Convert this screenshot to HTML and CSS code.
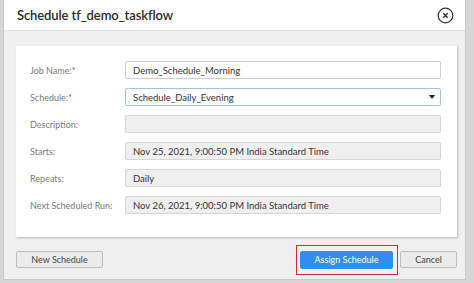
FILE: index.html
```html
<!DOCTYPE html>
<html lang="en">
  <head>
    <meta charset="UTF-8" />
    <title>Schedule tf_demo_taskflow</title>
    <link rel="stylesheet" href="styles.css">
  </head>
  <body>
    <div class="dialog">
      <div class="dialog-header">
        <span class="dialog-title">Schedule tf_demo_taskflow</span>
        <button class="close-btn" title="Close">
          <svg width="17" height="17" viewBox="0 0 17 17">
            <circle cx="8.5" cy="8.5" r="7.3" fill="none" stroke="#333" stroke-width="1.2" />
            <path d="M6.3 6.3 L10.7 10.7 M10.7 6.3 L6.3 10.7" stroke="#333" stroke-width="1.4" />
          </svg>
        </button>
      </div>

      <div class="dialog-body">
        <div class="form-card">
          <label class="field-label">Job Name:<span class="req">*</span></label>
          <div class="field-input">Demo_Schedule_Morning</div>

          <label class="field-label">Schedule:<span class="req">*</span></label>
          <div class="field-input select">
            <span>Schedule_Daily_Evening</span>
            <span class="caret"></span>
          </div>

          <label class="field-label">Description:</label>
          <div class="field-input readonly"></div>

          <label class="field-label">Starts:</label>
          <div class="field-input readonly">Nov 25, 2021, 9:00:50 PM India Standard Time</div>

          <label class="field-label">Repeats:</label>
          <div class="field-input readonly">Daily</div>

          <label class="field-label">Next Scheduled Run:</label>
          <div class="field-input readonly">Nov 26, 2021, 9:00:50 PM India Standard Time</div>
        </div>

        <div class="dialog-footer">
          <button class="btn btn-new">New Schedule</button>
          <div class="footer-right">
            <span class="highlight">
              <button class="btn btn-primary">Assign Schedule</button>
            </span>
            <button class="btn btn-cancel">Cancel</button>
          </div>
        </div>
      </div>
    </div>
  </body>
</html>
```

FILE: styles.css
```css
body {
  margin: 0;
  padding: 0;
  background-color: #d6d6d6;
  font-family: Lato, "Noto Sans", sans-serif;
  color: #333;
}

.dialog {
  width: 463px;
  height: 280px;
  margin-left: 3px;
  background-color: #f0f0f0;
  border: 1px solid #c9c9c9;
  border-top: none;
  box-sizing: border-box;
  display: flex;
  flex-direction: column;
}

.dialog-header {
  height: 31px;
  flex: none;
  background-color: #ffffff;
  border-bottom: 1px solid #e4e4e4;
  box-sizing: border-box;
  display: flex;
  align-items: center;
  justify-content: space-between;
  padding: 0 11px 0 13px;
}

.dialog-title {
  font-size: 13px;
  font-weight: 600;
  color: #2b2b2b;
  letter-spacing: -0.1px;
}

.close-btn {
  background: none;
  border: none;
  padding: 0;
  width: 17px;
  height: 17px;
  display: flex;
  cursor: pointer;
}

.dialog-body {
  flex: 1;
  padding: 15px 9px 0 12px;
}

.form-card {
  width: 441px;
  box-sizing: border-box;
  background-color: #ffffff;
  box-shadow: 1px 1px 2px rgba(0, 0, 0, 0.25);
  padding: 15px 16px 23px 14px;
  display: grid;
  grid-template-columns: 95px 1fr;
  row-gap: 9px;
  align-items: center;
}

.field-label {
  font-size: 9px;
  color: #7a7a7a;
}

.req {
  color: #d0283c;
}

.field-input {
  height: 18px;
  box-sizing: border-box;
  border: 1px solid #cfcfcf;
  border-radius: 2px;
  background-color: #ffffff;
  padding: 0 7px;
  font-size: 9.5px;
  color: #333;
  display: flex;
  align-items: center;
}

.field-input.select {
  border-color: #9cc3e8;
  justify-content: space-between;
  padding-right: 5px;
}

.caret {
  width: 0;
  height: 0;
  border-left: 3px solid transparent;
  border-right: 3px solid transparent;
  border-top: 4px solid #222;
}

.field-input.readonly {
  background-color: #efefef;
  border-color: #d6d6d6;
}

.dialog-footer {
  margin-top: 14px;
  width: 441px;
  display: flex;
  align-items: center;
  justify-content: space-between;
}

.footer-right {
  display: flex;
  align-items: center;
  gap: 2px;
}

.highlight {
  display: flex;
  border: 1.5px solid #cf2a3b;
  padding: 5px 4px 5px 3px;
  margin: -7px 0;
}

.btn {
  height: 17px;
  font-family: inherit;
  font-size: 9px;
  border-radius: 2px;
  padding: 0;
  cursor: pointer;
}

.btn-new {
  width: 87px;
  background-color: #ebebeb;
  border: 1px solid #bdbdbd;
  color: #444;
}

.btn-primary {
  width: 93px;
  height: 18px;
  background-color: #2e8ef2;
  border: 1px solid #2e8ef2;
  color: #ffffff;
}

.btn-cancel {
  width: 57px;
  background-color: #ebebeb;
  border: 1px solid #bdbdbd;
  color: #444;
}
```
